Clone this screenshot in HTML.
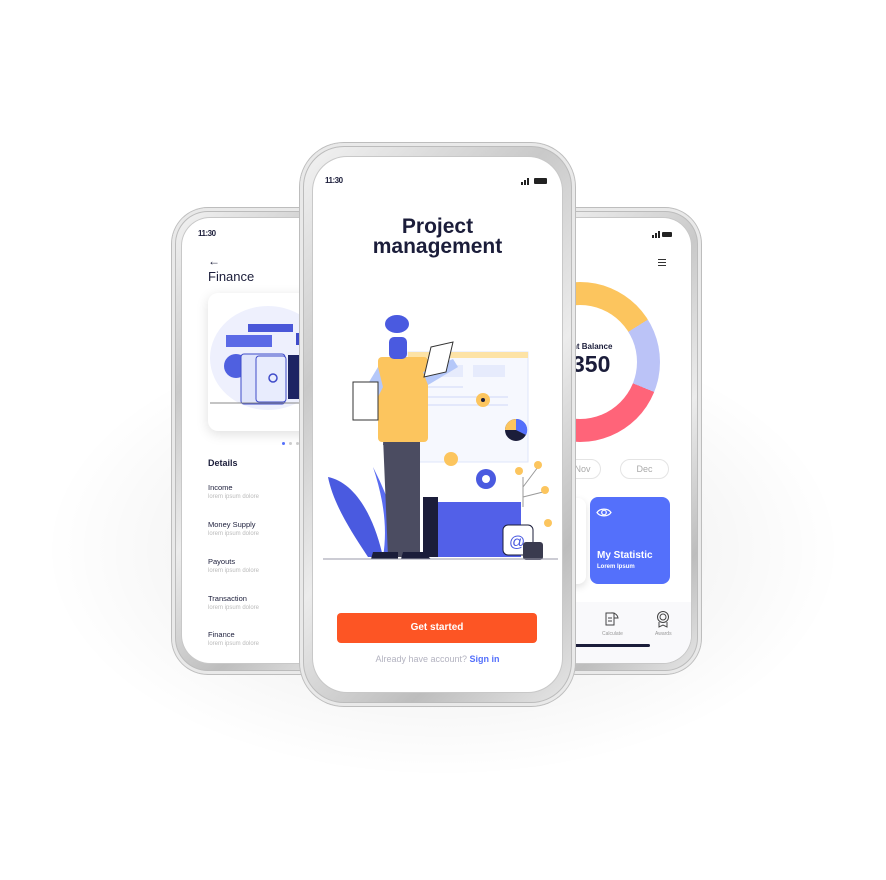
<!DOCTYPE html>
<html><head><meta charset="utf-8"><style>
*{margin:0;padding:0;box-sizing:border-box}
body{width:886px;height:880px;background:#fff;position:relative;overflow:hidden;font-family:"Liberation Sans",sans-serif}
.shadow{position:absolute;left:40px;top:320px;width:806px;height:460px;border-radius:50%;background:radial-gradient(ellipse at center,rgba(0,0,0,0.07) 0%,rgba(0,0,0,0.035) 45%,rgba(0,0,0,0) 70%)}
.frame{position:absolute;border-radius:40px;background:linear-gradient(135deg,#f4f4f4,#c9c9c9 30%,#ececec 55%,#bdbdbd 80%,#e8e8e8);box-shadow:0 0 0 1px #bdbdbd,inset 0 0 0 3px #e9e9e9,inset 0 0 0 4px #bcbcbc}
.screen{position:absolute;background:#fff;overflow:hidden;border-radius:30px;box-shadow:0 0 0 1px #c8c8c8}
.abs{position:absolute}
.dk{color:#1b1d3a}
</style></head><body>
<div class="shadow"></div>

<!-- Right phone -->
<div class="frame" style="left:540px;top:208px;width:161px;height:466px;border-radius:36px"></div>
<div class="screen" style="left:550px;top:218px;width:141px;height:445px;border-radius:28px">
  <svg class="abs" style="left:102px;top:12px" width="30" height="8"><rect x="0" y="5" width="2" height="3" fill="#222"/><rect x="3" y="3" width="2" height="5" fill="#222"/><rect x="6" y="1" width="2" height="7" fill="#222"/><rect x="10" y="2" width="10" height="5" rx="1" fill="#222"/></svg>
  <svg class="abs" style="left:107px;top:40px" width="10" height="9"><path d="M1 1.5H9M1 4.5H9M1 7.5H9" stroke="#333" stroke-width="1.1"/></svg>
  <div class="abs" style="left:-50px;top:64px;width:160px;height:160px;border-radius:50%;background:conic-gradient(#fcc55e 0deg 58deg,#bbc3f7 58deg 112deg,#ff6479 112deg 250deg,#fcc55e 250deg 360deg)"></div>
  <div class="abs" style="left:-27px;top:87px;width:114px;height:114px;border-radius:50%;background:#fff"></div>
  <div class="abs dk" style="left:22px;top:124px;font-size:8px;font-weight:bold">nt Balance</div>
  <div class="abs dk" style="left:22px;top:133px;font-size:23px;font-weight:bold">350</div>
  <div class="abs" style="left:14px;top:241px;width:37px;height:20px;border:1px solid #e4e4e4;border-radius:10px;font-size:9px;color:#aaa;text-align:center;line-height:18px">Nov</div>
  <div class="abs" style="left:70px;top:241px;width:49px;height:20px;border:1px solid #e4e4e4;border-radius:10px;font-size:9px;color:#aaa;text-align:center;line-height:18px">Dec</div>
  <div class="abs" style="left:-10px;top:280px;width:46px;height:86px;border-radius:8px;background:#fff;box-shadow:0 3px 8px rgba(0,0,0,0.12)"></div>
  <div class="abs" style="left:40px;top:279px;width:80px;height:87px;border-radius:8px;background:#5470fb"></div>
  <svg class="abs" style="left:46px;top:289px" width="16" height="11"><path d="M1 5.5C4 1 12 1 15 5.5C12 10 4 10 1 5.5Z" fill="none" stroke="#fff" stroke-width="1.2"/><circle cx="8" cy="5.5" r="2.3" fill="none" stroke="#fff" stroke-width="1.2"/></svg>
  <div class="abs" style="left:47px;top:332px;font-size:10px;font-weight:bold;color:#fff">My Statistic</div>
  <div class="abs" style="left:47px;top:346px;font-size:6px;font-weight:bold;color:#fff">Lorem Ipsum</div>
  <div class="abs" style="left:0;top:384px;width:141px;height:61px;background:#f9f9fb"></div>
  <svg class="abs" style="left:54px;top:391px" width="16" height="18"><rect x="2" y="4" width="8" height="12" fill="none" stroke="#444" stroke-width="1"/><path d="M7 4A6 6 0 0 1 14 9L10 9" fill="none" stroke="#444"/><path d="M4 9H8M4 12H8" stroke="#444"/></svg>
  <div class="abs" style="left:52px;top:413px;font-size:5px;color:#999">Calculate</div>
  <svg class="abs" style="left:106px;top:392px" width="14" height="18"><circle cx="7" cy="7" r="5.5" fill="none" stroke="#444"/><circle cx="7" cy="7" r="3" fill="none" stroke="#444"/><path d="M3 12V17L7 15L11 17V12" fill="none" stroke="#444"/></svg>
  <div class="abs" style="left:105px;top:413px;font-size:5px;color:#999">Awards</div>
  <div class="abs" style="left:0;top:426px;width:100px;height:3px;border-radius:2px;background:#1b1d3a"></div>
</div>

<!-- Left phone -->
<div class="frame" style="left:172px;top:208px;width:170px;height:466px;border-radius:36px"></div>
<div class="screen" style="left:182px;top:218px;width:150px;height:445px;border-radius:28px">
  <div class="abs dk" style="left:16px;top:11px;font-size:8px;font-weight:bold;letter-spacing:-0.5px">11:30</div>
  <div class="abs dk" style="left:26px;top:36px;font-size:12px">←</div>
  <div class="abs dk" style="left:26px;top:51px;font-size:13px">Finance</div>
  <div class="abs" style="left:26px;top:75px;width:130px;height:138px;border-radius:10px;background:#fff;box-shadow:0 3px 12px rgba(0,0,0,0.13)"></div>
  <svg class="abs" style="left:26px;top:75px" width="124" height="138">
    <ellipse cx="60" cy="65" rx="58" ry="52" fill="#eef0fd"/>
    <rect x="40" y="31" width="45" height="8" fill="#4a57d8"/>
    <rect x="18" y="42" width="46" height="12" fill="#5b6ae6"/>
    <circle cx="28" cy="73" r="12" fill="#4f60e0"/>
    <rect x="33" y="61" width="44" height="50" rx="3" fill="#dfe4fb" stroke="#3f4bc9"/>
    <rect x="48" y="63" width="30" height="46" rx="3" fill="#e8ecfd" stroke="#3f4bc9"/>
    <circle cx="65" cy="85" r="4" fill="none" stroke="#3f4bc9" stroke-width="1.5"/>
    <rect x="80" y="62" width="20" height="44" fill="#1d2463"/>
    <path d="M88 40h10v12h-10z" fill="#3f4bc9"/>
    <path d="M2 110H124" stroke="#888" stroke-width="1"/>
  </svg>
  <div class="abs" style="left:100px;top:224px;width:3px;height:3px;border-radius:50%;background:#5470fb"></div>
  <div class="abs" style="left:107px;top:224px;width:3px;height:3px;border-radius:50%;background:#ccc"></div>
  <div class="abs" style="left:114px;top:224px;width:3px;height:3px;border-radius:50%;background:#ccc"></div>
  <div class="abs dk" style="left:26px;top:240px;font-size:9px;font-weight:bold">Details</div>
  <div class="abs dk" style="left:26px;top:266px;font-size:7.5px;line-height:8px">Income<br><span style="color:#bbb;font-size:6px">lorem ipsum dolore</span></div>
  <div class="abs dk" style="left:26px;top:303px;font-size:7.5px;line-height:8px">Money Supply<br><span style="color:#bbb;font-size:6px">lorem ipsum dolore</span></div>
  <div class="abs dk" style="left:26px;top:340px;font-size:7.5px;line-height:8px">Payouts<br><span style="color:#bbb;font-size:6px">lorem ipsum dolore</span></div>
  <div class="abs dk" style="left:26px;top:377px;font-size:7.5px;line-height:8px">Transaction<br><span style="color:#bbb;font-size:6px">lorem ipsum dolore</span></div>
  <div class="abs dk" style="left:26px;top:413px;font-size:7.5px;line-height:8px">Finance<br><span style="color:#bbb;font-size:6px">lorem ipsum dolore</span></div>
</div>

<!-- Center phone -->
<div class="frame" style="left:300px;top:143px;width:275px;height:563px;border-radius:44px"></div>
<div class="screen" style="left:313px;top:157px;width:249px;height:535px;border-radius:34px">
  <div class="abs dk" style="left:12px;top:19px;font-size:8px;font-weight:bold;letter-spacing:-0.5px">11:30</div>
  <svg class="abs" style="left:208px;top:20px" width="30" height="8"><rect x="0" y="5" width="2" height="3" fill="#222"/><rect x="3" y="3" width="2" height="5" fill="#222"/><rect x="6" y="1" width="2" height="7" fill="#222"/><rect x="13" y="1" width="13" height="6" rx="1" fill="#222"/></svg>
  <div class="abs dk" style="left:0;top:60px;width:249px;text-align:center;font-size:21px;font-weight:bold;line-height:20px">Project<br>management</div>
  <svg class="abs" style="left:10px;top:140px" width="235" height="265">
    <rect x="85" y="55" width="120" height="110" fill="#f6f8fe" stroke="#dfe6fb"/>
    <rect x="85" y="55" width="120" height="6" fill="#fde3a6"/>
    <rect x="95" y="68" width="45" height="12" fill="#e6ebfc"/><rect x="150" y="68" width="32" height="12" fill="#e6ebfc"/>
    <path d="M95 90H140M95 100H185M95 108H185" stroke="#e3e8fb" stroke-width="2"/>
    <path d="M5 180C30 185 50 215 60 260L45 260C25 230 10 205 5 180Z" fill="#4a5ae0"/>
    <path d="M50 170C60 200 65 230 60 260L75 260C75 225 65 200 50 170Z" fill="#5a6cf0"/>
    <path d="M60 140H97V260H65Z" fill="#4b4c61"/>
    <path d="M62 130L88 130L90 148L60 148Z" fill="#4b4c61"/>
    <rect x="55" y="60" width="50" height="85" rx="4" fill="#fcc55e"/>
    <path d="M55 70L40 95L50 110L60 90Z" fill="#b5c8f9"/>
    <path d="M100 75L130 62L135 70L105 88Z" fill="#b5c8f9"/>
    <rect x="30" y="85" width="25" height="38" fill="#fff" stroke="#333"/>
    <path d="M108 50L130 45L123 75L101 80Z" fill="#fff" stroke="#333"/>
    <rect x="66" y="40" width="18" height="22" rx="5" fill="#4a5ae0"/>
    <ellipse cx="74" cy="27" rx="12" ry="9" fill="#4a5ae0"/>
    <path d="M50 255H75V262H48Z" fill="#1b1d3a"/><path d="M80 255H100L108 262H78Z" fill="#1b1d3a"/>
    <circle cx="160" cy="103" r="7" fill="#fcc55e"/><circle cx="160" cy="103" r="2" fill="#1b1d3a"/>
    <circle cx="193" cy="133" r="11" fill="#1b1d3a"/><path d="M193 133V122A11 11 0 0 1 203 138Z" fill="#5470fb"/><path d="M193 133L182 133A11 11 0 0 1 193 122Z" fill="#fcc55e"/>
    <circle cx="128" cy="162" r="7" fill="#fcc55e"/>
    <circle cx="163" cy="182" r="10" fill="#4a5ae0"/><circle cx="163" cy="182" r="4" fill="#fff"/>
    <rect x="108" y="205" width="90" height="55" fill="#5260e8"/>
    <rect x="100" y="200" width="15" height="60" fill="#1b1d3a"/>
    <path d="M200 210V180M200 190L215 170M200 200L220 195" stroke="#999"/>
    <circle cx="215" cy="168" r="4" fill="#fcc55e"/><circle cx="222" cy="193" r="4" fill="#fcc55e"/><circle cx="196" cy="174" r="4" fill="#fcc55e"/><circle cx="225" cy="226" r="4" fill="#fcc55e"/>
    <rect x="180" y="228" width="30" height="30" rx="5" fill="#fff" stroke="#1b1d3a"/>
    <text x="186" y="250" font-size="16" fill="#4a5ae0" font-family="Liberation Sans">@</text>
    <rect x="200" y="245" width="20" height="18" rx="3" fill="#3a3b4f"/>
    <path d="M0 262H235" stroke="#9a9aa8" stroke-width="1"/>
  </svg>
  <div class="abs" style="left:24px;top:456px;width:200px;height:30px;border-radius:4px;background:#fd5524;color:#fff;font-size:10px;font-weight:bold;text-align:center;line-height:30px">Get started</div>
  <div class="abs" style="left:0;top:497px;width:249px;text-align:center;font-size:9px;color:#b3b3c0">Already have account? <b style="color:#5470fb">Sign in</b></div>
</div>
</body></html>
